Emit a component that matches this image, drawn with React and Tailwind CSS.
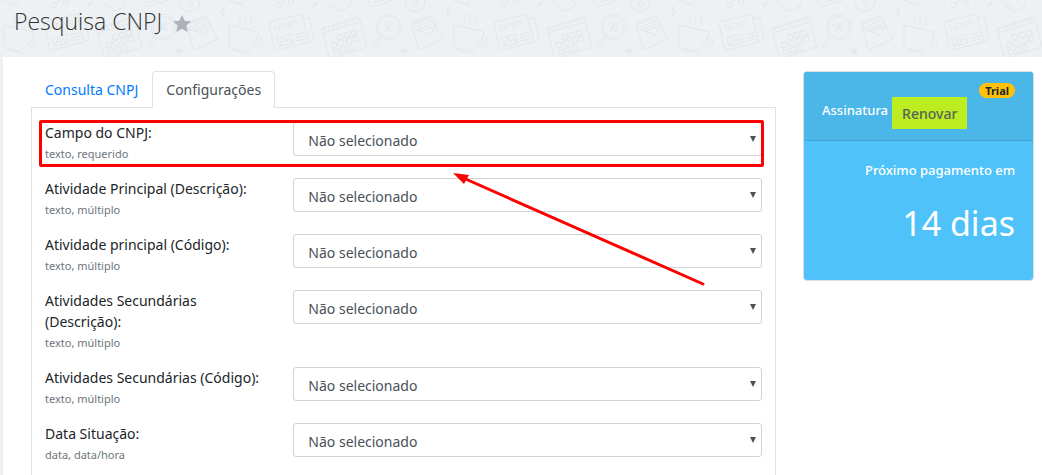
const fields = [
  { id: 'cnpj', label: 'Campo do CNPJ:', hint: 'texto, requerido', highlighted: true },
  { id: 'main-desc', label: 'Atividade Principal (Descrição):', hint: 'texto, múltiplo' },
  { id: 'main-code', label: 'Atividade principal (Código):', hint: 'texto, múltiplo' },
  { id: 'sec-desc', label: 'Atividades Secundárias (Descrição):', hint: 'texto, múltiplo' },
  { id: 'sec-code', label: 'Atividades Secundárias (Código):', hint: 'texto, múltiplo' },
  { id: 'date', label: 'Data Situação:', hint: 'data, data/hora' },
];

const calendarCells = [
  [115, 37], [122, 35], [129, 33],
  [109, 45], [116, 43], [124, 41], [131, 39],
  [111, 52], [118, 50], [125, 48],
];

function Doodles() {
  return (
    <svg aria-hidden="true" className="absolute inset-0 h-full w-full">
      <defs>
        <pattern id="doodles" width="225" height="225" patternUnits="userSpaceOnUse">
          <g fill="none" stroke="#e2e6ea" strokeWidth="1" strokeLinejoin="round" strokeLinecap="round">
            <path d="M4.300 25 L34 32 Q33 41 23 49 L20 51 L6 48 L4.300 46 Z M7 50 L22 53.500 L25 51" />
            <path d="M32 36 a5.500 5.500 0 1 1 -3 10 M32 39 a2.500 2.500 0 1 1 -1 5" />
            <path d="M16 14 q-3 3 -1 5 t-1 5 M21 15 q-3 3 -1 5 t-1 5 M27 16 q-3 3 -1 5 t-1 5" />
            <path d="M44.300 22 L76.700 14 L84 42 L52 50 Q50 50 49 47 Z M78 19 L84 17 L89 38 Q89 41 84 42" />
            <path d="M52 38 L66 34 L68 43 L54 46 Z M55 45 L58 38 L61 42 L63 38 L67 43 M70 35 L79 32.500 M71 38 L80 36 M71 41 L80 39" />
            <path d="M97 29 L134 17 L142 47 L105 59 Z M98 33 L135 22" />
            <path d="M99 27 l1 4 M103 26 l1 4 M107 25 l1 4 M111 23 l1 4 M115 22 l1 4 M119 21 l1 4 M123 19 l1 4 M127 18 l1 4 M131 17 l1 4" />
            {calendarCells.map(([x, y]) => (
              <rect key={`${x}-${y}`} x={x - 2.5} y={y - 2.5} width="5" height="5" transform={`rotate(-16 ${x} ${y})`} />
            ))}
            <circle cx="163.700" cy="27" r="12.700" />
            <circle cx="163.700" cy="27" r="10.500" />
            <path d="M156 38 L150 48 Q148 50 147 47 L154 36 M158 25 L168 30 M159 30 L169 23 M161 22 L166 32 M166 21 L161 32" />
            <path d="M187 28 L194 50 L218 39 L209 22 M187 28 L205 35 L211 24 M188 30 L186 23 L206 15.500 L211 28 M189 24 L205 18 M190 27 L206 21 M191 30 L207 24 M195 31 L208 27" />
            <path d="M179.300 47 v8 M175.500 51 h8 M177 49 l5 4 M182 49 l-5 4" />
            <path d="M223 8 l1 3 l1 1 l-1 1 l-1 3 l-1 -3 l-1 -1 l1 -1 Z M92 2 l-1 3 l-3 2 l1 -3 Z" />
            <circle cx="190" cy="1.700" r="10" />
            <path d="M188 0 L190 7 L193 5 L191 0 M190 7 L189 3" />
            <circle cx="54" cy="5" r="2.500" />
            <circle cx="66" cy="2" r="2.500" />
            <path d="M56 3 L60 0" />
            <path d="M102 1 L110 10 Q112 12 115 11 L124 7 L126 1 M107 3 L113 9 M143 1 Q145 8 150 6 L168 0 M150 2 L158 0 M3 0 L17 5 L20 0" />
          </g>
          <text x="50" y="31.500" transform="rotate(-14 50 31.500)" className="fill-[#dde1e5] text-[9px] font-light">NEWS</text>
        </pattern>
      </defs>
      <rect width="100%" height="100%" fill="url(#doodles)" />
    </svg>
  );
}

function Highlight() {
  return (
    <>
      <span className="pointer-events-none absolute -top-0.5 -right-0.5 -bottom-[3px] -left-1.5 rounded-[2px] border-[3px] border-[#ff0000]" />
      <svg aria-hidden="true" viewBox="0 0 252 113" className="pointer-events-none absolute top-[51px] left-[408px] z-10 h-[113px] w-[252px]">
        <path d="M8 4 L250 111" stroke="#ff0000" strokeWidth="3" strokeLinecap="round" />
        <path d="M0 0 L16 2 L11 11 Z" fill="#ff0000" />
      </svg>
    </>
  );
}

function Field({ id, label, hint, highlighted }) {
  return (
    <div className="relative grid grid-cols-[minmax(0,1fr)_minmax(0,2fr)] gap-[14px]">
      <div className="pr-[14px]">
        <label htmlFor={id} className="block text-[14px] leading-[21px] text-[#212529]">{label}</label>
        <small className="block text-[11px] leading-[21px] text-[#6c757d]">{hint}</small>
      </div>
      <div className="relative self-start">
        <select id={id} className="block h-[34px] w-full appearance-none rounded-[3px] border border-[#ced4da] bg-white px-[14px] pt-0.5 text-[14px] text-[#495057]">
          <option>Não selecionado</option>
        </select>
        <svg aria-hidden="true" viewBox="0 0 6 6" className="pointer-events-none absolute top-[14px] right-1.5 h-1.5 w-1.5">
          <path d="M0 0 H6 L3 6 Z" fill="#495057" />
        </svg>
      </div>
      {highlighted && <Highlight />}
    </div>
  );
}

export default function App() {
  return (
    <div className="relative h-screen overflow-hidden bg-[#edf1f4] font-['Noto_Sans',sans-serif]">
      <Doodles />
      <div className="relative">
        <header className="flex h-[57px] items-start gap-[11px] pt-[5px] pl-[14px]">
          <h1 className="font-['Open_Sans',sans-serif] text-[23px] leading-8 font-light text-[#333333]">Pesquisa CNPJ</h1>
          <button type="button" aria-label="Favorito" className="mt-[10px]">
            <svg viewBox="0 0 18 17" className="h-[17px] w-[18px]">
              <path d="M9 0 L11.600 5.700 L18 6.400 L13.300 10.600 L14.600 17 L9 13.800 L3.400 17 L4.700 10.600 L0 6.400 L6.400 5.700 Z" fill="#adb1b9" />
            </svg>
          </button>
        </header>
        <main className="ml-[3px] flex items-start gap-[27px] bg-white pt-[14px] pr-2 pb-7 pl-7">
          <section className="min-w-0 flex-1">
            <nav className="flex text-[14px] leading-[21px]">
              <a href="#consulta" className="border border-b-0 border-transparent px-[13px] py-[7px] text-[#007bff]">Consulta CNPJ</a>
              <a href="#config" className="relative z-10 -mb-px rounded-t-[4px] border border-b-0 border-[#dee2e6] bg-white px-[13px] pt-[7px] pb-2 text-[#495057]">Configurações</a>
            </nav>
            <form className="flex flex-col gap-[14px] border border-[#dee2e6] px-[13px] py-[14px]">
              {fields.map((field) => <Field key={field.id} {...field} />)}
            </form>
          </section>
          <aside className="w-[231px] overflow-hidden rounded-[4px] border border-[#d9dfe3] bg-[#4fc3f9] text-white">
            <div className="flex h-[69px] items-start justify-between border-b border-[#45a4d2] bg-[#4bb7e9] px-[18px] pt-[11px]">
              <div className="mt-[14px] flex items-center gap-1 text-[14px]">
                <span className="pb-1 text-[13px] font-medium">Assinatura</span>
                <button type="button" className="h-8 bg-[#bbed21] px-[10px] font-medium text-[#55645a]">Renovar</button>
              </div>
              <span className="-ml-4 rounded-full bg-[#ffc107] px-1.5 text-[11px] leading-[15px] font-bold text-[#212529]">Trial</span>
            </div>
            <div className="px-[18px] pt-[19px] pb-[29px] text-right">
              <p className="text-[13px] leading-[21px] font-medium">Próximo pagamento em</p>
              <p className="mt-[14px] text-[34px] leading-[56px]">14 dias</p>
            </div>
          </aside>
        </main>
      </div>
    </div>
  );
}
